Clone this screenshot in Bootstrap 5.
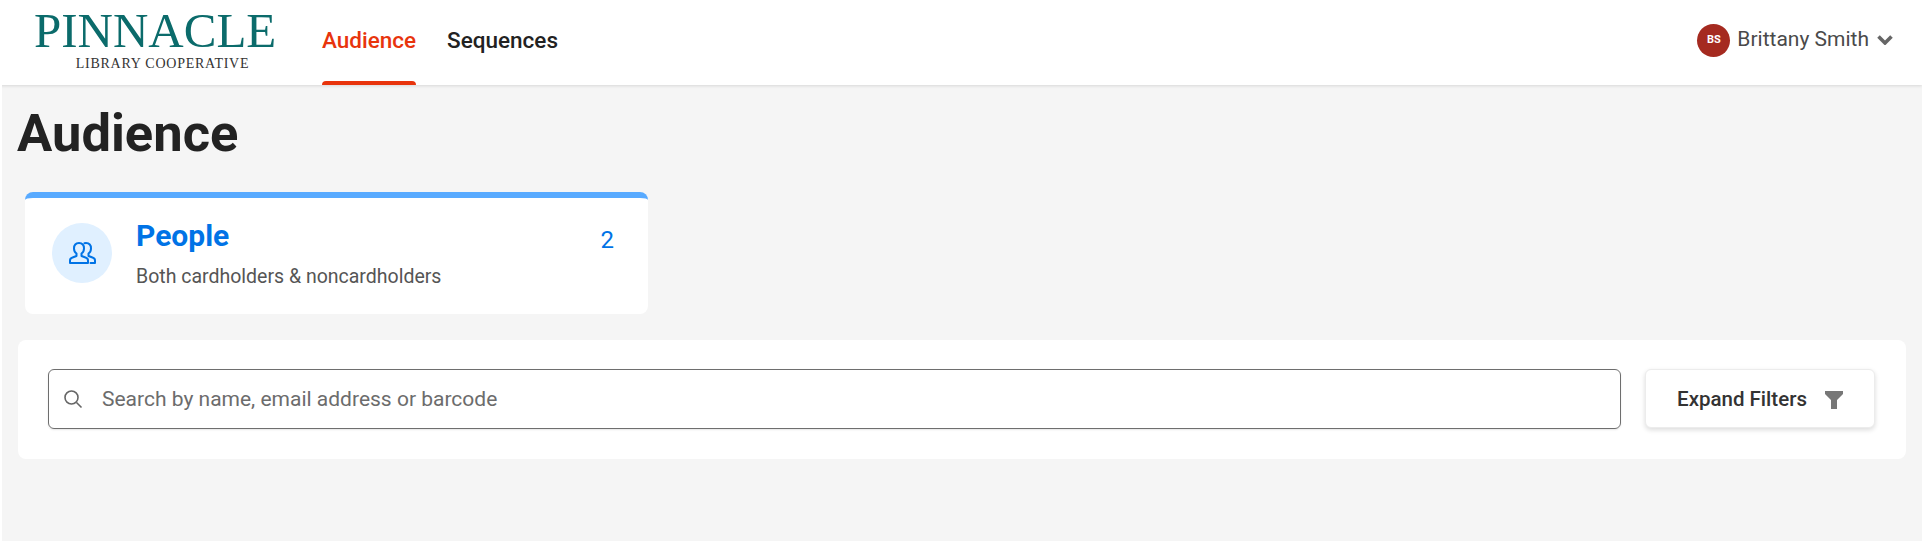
<!DOCTYPE html>
<html lang="en">
<head>
    <meta charset="UTF-8">
    <meta name="viewport" content="width=device-width, initial-scale=1.0">
    <title>Audience</title>
    <link href="https://cdn.jsdelivr.net/npm/bootstrap@5.3.0/dist/css/bootstrap.min.css" rel="stylesheet">

    <style>
        html, body {
            height: 100%;
        }
        body {
            background: #f5f5f5;
            border-left: 2px solid #fff;
            font-family: Roboto, "Liberation Sans", sans-serif;
            color: #222;
            overflow: hidden;
        }
        .top-bar {
            height: 85px;
            background: #fff;
            margin-left: -2px;
            box-shadow: 0 1px 3px rgba(0, 0, 0, 0.12);
            padding: 0 29px 0 34px;
        }
        .logo-box {
            width: 240px;
            margin-right: 48px;
            text-align: center;
            font-family: "Liberation Serif", serif;
            line-height: 1;
        }
        .logo-main {
            color: #0b6b6b;
            font-size: 49px;
            letter-spacing: 0;
            height: 46px;
            margin-top: 6px;
            white-space: nowrap;
        }
        .logo-sub {
            color: #333;
            font-size: 14px;
            letter-spacing: 0.75px;
            margin-top: 5px;
            padding-left: 17px;
            white-space: nowrap;
        }
        .main-tab {
            position: relative;
            height: 85px;
            display: flex;
            align-items: center;
            margin-right: 31px;
            padding-bottom: 4px;
            font-size: 22.5px;
            font-weight: 500;
            color: #222;
            text-decoration: none;
        }
        .main-tab.on {
            color: #e8340c;
        }
        .main-tab.on::after {
            content: "";
            position: absolute;
            left: 0;
            right: 0;
            bottom: 0;
            height: 4px;
            background: #e8340c;
            border-radius: 4px 4px 0 0;
        }
        .user-block {
            padding-bottom: 5px;
        }
        .user-dot {
            width: 33px;
            height: 33px;
            background: #a52a20;
            color: #fff;
            font-size: 11px;
            font-weight: 700;
        }
        .user-name {
            font-size: 21px;
            color: #4a4a4a;
            margin: 0 8px 0 7px;
        }
        .page-title {
            font-size: 52.5px;
            font-weight: 700;
            line-height: 61px;
            margin: 18px 0 0 15px;
            color: #222;
        }
        .people-card {
            width: 623px;
            height: 122px;
            margin: 28px 0 0 23px;
            background: #fff;
            border-top: 6px solid #58aaff;
            border-radius: 8px;
            padding: 25px 34px 0 27px;
        }
        .people-icon {
            width: 60px;
            height: 60px;
            background: #e0f0ff;
            margin-right: 24px;
        }
        .people-name {
            font-size: 30px;
            font-weight: 700;
            line-height: 35px;
            color: #0073e6;
            margin-top: -5px;
        }
        .people-desc {
            font-size: 19.5px;
            line-height: 24px;
            color: #555;
            margin-top: 12px;
        }
        .people-count {
            font-size: 24px;
            line-height: 28px;
            color: #0073e6;
            margin-top: 3px;
        }
        .search-panel {
            height: 119px;
            margin: 26px 16px 0 16px;
            background: #fff;
            border-radius: 8px;
            padding: 29px 31px 0 30px;
        }
        .search-box {
            height: 60px;
            border: 1px solid #6e6e6e;
            border-radius: 6px;
            margin-right: 24px;
            padding-left: 14px;
            box-shadow: 0 1px 2px rgba(0, 0, 0, 0.1);
        }
        .search-box input {
            border: 0;
            outline: 0;
            flex-grow: 1;
            margin-left: 17px;
            padding-top: 3px;
            font-size: 21px;
            color: #333;
            background: transparent;
        }
        .search-box input::placeholder {
            color: #6c6c6c;
            opacity: 1;
        }
        .filter-btn {
            width: 230px;
            height: 59px;
            padding-top: 8px;
            background: #fff;
            border: 1px solid #ececec;
            border-radius: 6px;
            box-shadow: 0 2px 5px rgba(0, 0, 0, 0.14);
            font-size: 20.5px;
            font-weight: 500;
            color: #333;
            gap: 18px;
        }
        .filter-btn:hover {
            background: #fff;
            color: #333;
        }
    </style>
</head>
<body>

    <header class="top-bar d-flex align-items-center">
        <div class="logo-box align-self-start">
            <div class="logo-main">PINNACLE</div>
            <div class="logo-sub">LIBRARY COOPERATIVE</div>
        </div>
        <a href="#" class="main-tab on">Audience</a>
        <a href="#" class="main-tab">Sequences</a>
        <div class="user-block ms-auto d-flex align-items-center">
            <span class="user-dot rounded-circle d-flex align-items-center justify-content-center">BS</span>
            <span class="user-name">Brittany Smith</span>
            <svg width="16" height="10" viewBox="0 0 16 10" fill="none" stroke="#666" stroke-width="3.6">
                <path d="M1.5 1.5 8 8l6.5-6.5"/>
            </svg>
        </div>
    </header>

    <h1 class="page-title">Audience</h1>

    <div class="people-card d-flex align-items-start">
        <div class="people-icon rounded-circle d-flex align-items-center justify-content-center flex-shrink-0">
            <svg width="27" height="22" viewBox="0 0 27 22" fill="none" stroke="#0073e6" stroke-width="2" stroke-linejoin="round" stroke-linecap="round">
                <path d="M1 21v-2.500c0-1.500 1-2.500 2.500-3l4-1.500v-2.500C6 10.500 5 8.500 5 6.500 5 3 7 1 10 1s5 2 5 5.500c0 2-1 4-2.500 5V14l4 1.500c1.500.5 2.500 1.500 2.500 3V21z"/>
                <path d="M15.500 1.300C16 1.100 16.500 1 17 1c3 0 5 2 5 5.500 0 2-1 4-2.500 5V14l4 1.500c1.500.5 2.500 1.500 2.500 3V21h-4.500"/>
            </svg>
        </div>
        <div class="flex-grow-1">
            <div class="people-name">People</div>
            <div class="people-desc">Both cardholders &amp; noncardholders</div>
        </div>
        <div class="people-count">2</div>
    </div>

    <div class="search-panel d-flex align-items-start">
        <div class="search-box d-flex align-items-center flex-grow-1">
            <svg width="20" height="20" viewBox="0 0 20 20" fill="none" stroke="#666" stroke-width="1.600">
                <circle cx="8.500" cy="8.500" r="6.500"/>
                <path d="m13.500 13.500 5 5"/>
            </svg>
            <input type="text" placeholder="Search by name, email address or barcode">
        </div>
        <button type="button" class="btn filter-btn d-flex align-items-center justify-content-center flex-shrink-0">
            Expand Filters
            <svg width="18" height="18" viewBox="0 0 18 18" fill="#777">
                <path d="M0 0h18v3l-6 6v9H6V9L0 3z"/>
            </svg>
        </button>
    </div>

    <script src="https://cdn.jsdelivr.net/npm/bootstrap@5.3.0/dist/js/bootstrap.bundle.min.js"></script>
</body>
</html>
